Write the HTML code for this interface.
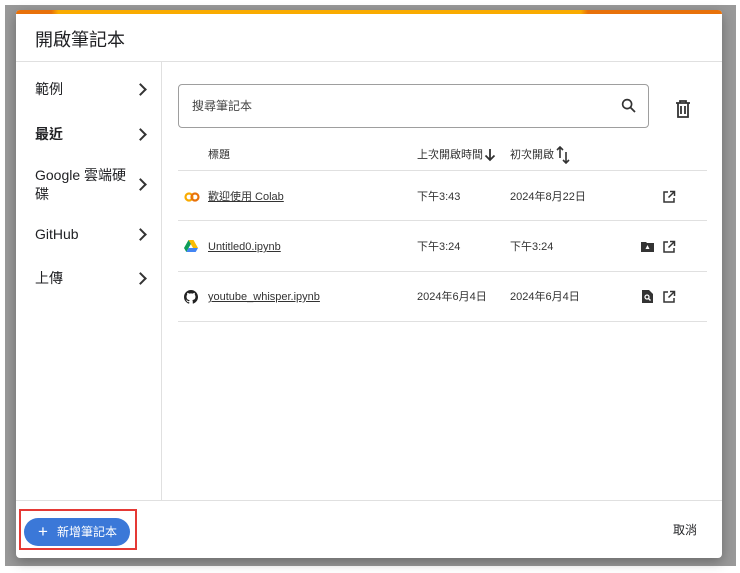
<!DOCTYPE html>
<html><head><meta charset="utf-8"><style>
*{box-sizing:border-box;margin:0;padding:0}
body{width:740px;height:573px;background:#fff;position:relative;overflow:hidden;font-family:"Liberation Sans","Noto Sans CJK TC",sans-serif;color:#202124}
.ov{position:absolute;left:5px;top:5px;width:731px;height:561px;background:#999}
.dlg{position:absolute;left:16px;top:10px;width:706px;height:548px;background:#fff;border-radius:4px;overflow:hidden;box-shadow:0 4px 12px rgba(0,0,0,.3)}
.bar{position:absolute;left:0;top:0;width:100%;height:4px;background:linear-gradient(90deg,#e8710a 0,#e8710a 5%,#f9ab00 6%,#f9ab00 80%,#e8710a 81%)}
.title{position:absolute;left:19px;top:18px;font-size:18px;line-height:24px}
.hl{position:absolute;left:0;top:51px;width:100%;height:1px;background:#e0e0e0}
.side{position:absolute;left:0;top:52px;width:146px;height:439px;border-right:1px solid #e0e0e0}
.si{position:absolute;left:19px;font-size:14px;line-height:19px}
.chev{position:absolute;left:120px;width:9px;height:9px;border-right:2px solid #333;border-top:2px solid #333;transform:rotate(45deg)}
.fl{position:absolute;left:0;top:490px;width:100%;height:1px;background:#e0e0e0}
.search{position:absolute;left:162px;top:74px;width:471px;height:44px;border:1px solid #9e9e9e;border-radius:4px}
.search span{position:absolute;left:13px;top:14px;font-size:12px;line-height:14px;color:#444}
.t{position:absolute;font-size:11px;line-height:14px;color:#333}
.row{position:absolute;left:162px;width:529px;height:1px;background:#e0e0e0}
.lnk{text-decoration:underline}
.btn{position:absolute;left:8px;top:508px;width:106px;height:28px;border-radius:14px;background:#3b78d8;color:#fff;font-size:12px;line-height:28px}
.red{position:absolute;left:19px;top:509px;width:118px;height:41px;border:2px solid #e53935;z-index:5}
</style></head><body>
<div class="ov"></div>
<div class="dlg">
<div class="bar"></div>
<div class="title">開啟筆記本</div>
<div class="hl"></div>
<div class="side">
<div class="si" style="top:18px">範例</div><div class="chev" style="top:23px"></div>
<div class="si" style="top:63px;font-weight:bold">最近</div><div class="chev" style="top:68px"></div>
<div class="si" style="top:104px;width:100px">Google 雲端硬碟</div><div class="chev" style="top:118px"></div>
<div class="si" style="top:163px">GitHub</div><div class="chev" style="top:168px"></div>
<div class="si" style="top:207px">上傳</div><div class="chev" style="top:212px"></div>
</div>
<div class="search"><span>搜尋筆記本</span>
<svg style="position:absolute;right:10px;top:12px" width="18" height="18" viewBox="0 0 24 24"><circle cx="9.5" cy="9.5" r="6" fill="none" stroke="#333" stroke-width="2.2"/><path d="M14 14l6 6" stroke="#333" stroke-width="2.4"/></svg></div>
<svg style="position:absolute;left:658px;top:89px" width="18" height="20" viewBox="0 0 18 20"><path d="M2 4h14M6 4V2h6v2M4 4v14h10V4M7 7v8M11 7v8" fill="none" stroke="#333" stroke-width="1.8"/></svg>
<div class="t" style="left:192px;top:138px">標題</div>
<div class="t" style="left:401px;top:138px">上次開啟時間</div>
<svg style="position:absolute;left:468px;top:138px" width="12" height="14" viewBox="0 0 12 14"><path d="M6 1v11M1.5 7.5L6 12l4.5-4.5" fill="none" stroke="#333" stroke-width="1.8"/></svg>
<div class="t" style="left:494px;top:138px">初次開啟</div>
<svg style="position:absolute;left:540px;top:136px" width="14" height="18" viewBox="0 0 14 18"><path d="M4 12V1M1 4l3-3 3 3M10 6v11M7 14l3 3 3-3" fill="none" stroke="#333" stroke-width="1.6"/></svg>
<div class="row" style="top:160px"></div>
<svg style="position:absolute;left:168px;top:182px" width="16" height="10" viewBox="0 0 16 10"><circle cx="5" cy="5" r="3.5" fill="none" stroke="#f9ab00" stroke-width="2.2"/><circle cx="11" cy="5" r="3.5" fill="none" stroke="#e8710a" stroke-width="2.2"/></svg>
<div class="t lnk" style="left:192px;top:180px">歡迎使用 Colab</div>
<div class="t" style="left:401px;top:180px">下午3:43</div>
<div class="t" style="left:494px;top:180px">2024年8月22日</div>
<div class="row" style="top:210px"></div>
<svg style="position:absolute;left:168px;top:230px" width="14" height="12" viewBox="0 0 14 12"><path d="M4.5 0h5L14 8H9z" fill="#fbbc04"/><path d="M4.5 0L0 8l2.3 4 4.6-8z" fill="#0f9d58"/><path d="M2.3 12h9.4L14 8H4.6z" fill="#4285f4"/></svg>
<div class="t lnk" style="left:192px;top:230px">Untitled0.ipynb</div>
<div class="t" style="left:401px;top:230px">下午3:24</div>
<div class="t" style="left:494px;top:230px">下午3:24</div>
<div class="row" style="top:261px"></div>
<svg style="position:absolute;left:168px;top:280px" width="14" height="14" viewBox="0 0 16 16"><path fill="#222" d="M8 0C3.6 0 0 3.6 0 8c0 3.5 2.3 6.5 5.5 7.6.4.1.5-.2.5-.4v-1.4c-2.2.5-2.7-1-2.7-1-.4-.9-.9-1.2-.9-1.2-.7-.5.1-.5.1-.5.8.1 1.2.8 1.2.8.7 1.2 1.9.9 2.300.7.1-.5.3-.9.5-1.1-1.8-.2-3.6-.9-3.600-4 0-.9.3-1.600.8-2.100-.1-.2-.4-1 .1-2.1 0 0 .7-.2 2.2.8.6-.2 1.3-.3 2-.3s1.4.1 2 .3c1.5-1 2.2-.8 2.2-.8.4 1.1.2 1.9.1 2.1.5.6.8 1.3.8 2.1 0 3.1-1.900 3.7-3.6 3.9.3.3.5.8.5 1.5v2.2c0 .2.1.5.6.4C13.7 14.5 16 11.5 16 8c0-4.4-3.6-8-8-8z"/></svg>
<div class="t lnk" style="left:192px;top:280px">youtube_whisper.ipynb</div>
<div class="t" style="left:401px;top:280px">2024年6月4日</div>
<div class="t" style="left:494px;top:280px">2024年6月4日</div>
<div class="row" style="top:311px"></div>
<svg style="position:absolute;left:646px;top:180px" width="14" height="14" viewBox="0 0 14 14"><path d="M6 2H2v10h10V8M8 1.5h4.5V6M12.5 1.5L6.5 7.5" fill="none" stroke="#333" stroke-width="1.5"/></svg>
<svg style="position:absolute;left:646px;top:230px" width="14" height="14" viewBox="0 0 14 14"><path d="M6 2H2v10h10V8M8 1.5h4.5V6M12.5 1.5L6.5 7.5" fill="none" stroke="#333" stroke-width="1.5"/></svg>
<svg style="position:absolute;left:646px;top:280px" width="14" height="14" viewBox="0 0 14 14"><path d="M6 2H2v10h10V8M8 1.5h4.5V6M12.5 1.5L6.5 7.5" fill="none" stroke="#333" stroke-width="1.5"/></svg>
<svg style="position:absolute;left:625px;top:231px" width="13" height="11" viewBox="0 0 13 11"><path d="M0 1h5l1 1h7v9H0z" fill="#333"/><path d="M6.5 4l2 4h-4z" fill="#fff"/></svg>
<svg style="position:absolute;left:626px;top:280px" width="11" height="13" viewBox="0 0 11 13"><path d="M0 0h7l4 4v9H0z" fill="#333"/><circle cx="5" cy="7" r="2" fill="none" stroke="#fff" stroke-width="1.3"/><path d="M6.5 8.5l2 2" stroke="#fff" stroke-width="1.3"/></svg>
<div class="fl"></div>
<div class="btn"><span style="font-size:17px;margin-left:14px;vertical-align:-1px">+</span><span style="margin-left:9px">新增筆記本</span></div>
<div class="t" style="left:657px;top:513px;font-size:12px;color:#202124">取消</div>
</div>
<div class="red"></div>
</body></html>
